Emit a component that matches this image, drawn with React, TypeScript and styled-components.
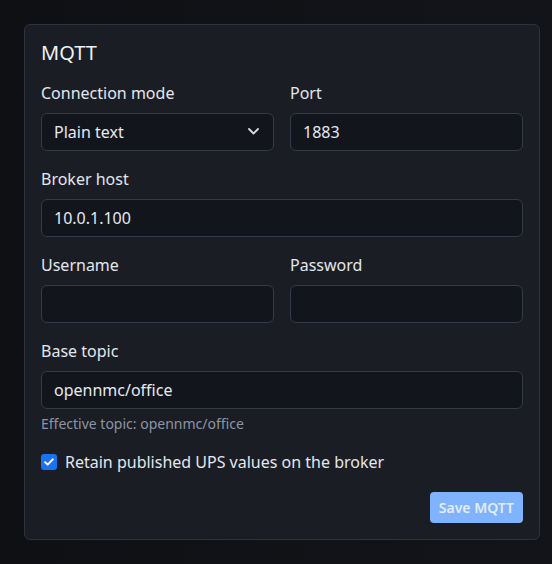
import React, { useState } from "react";
import styled, { createGlobalStyle } from "styled-components";

// Global

const GlobalStyle = createGlobalStyle`
  html, body {
    margin: 0;
    padding: 0;
    background: #111318;
  }
  body {
    font-family: "Noto Sans", "Open Sans", sans-serif;
    color: #e3e7ee;
  }
`;

// Styled Components

const Page = styled.div`
  padding: 24px;
  min-height: 564px;
  box-sizing: border-box;
  background: linear-gradient(90deg, #0f1014 0%, #121419 100%);
`;

const Card = styled.section`
  width: 516px;
  box-sizing: border-box;
  padding: 16px;
  background: #1a1d24;
  border: 1px solid #2d323e;
  border-radius: 6px;
  display: flex;
  flex-direction: column;
`;

const Title = styled.h2`
  margin: 0 0 16px;
  font-size: 20px;
  line-height: 24px;
  font-weight: 400;
  color: #eef1f6;
`;

const Row = styled.div<{ $cols?: number }>`
  display: grid;
  grid-template-columns: repeat(${(p) => p.$cols ?? 1}, 1fr);
  column-gap: 16px;
  margin-bottom: 16px;
`;

const Field = styled.div`
  display: flex;
  flex-direction: column;
`;

const Label = styled.label`
  font-size: 16px;
  line-height: 24px;
  margin-bottom: 8px;
  color: #e3e7ee;
`;

const Input = styled.input`
  box-sizing: border-box;
  height: 38px;
  width: 100%;
  padding: 0 12px;
  background: #12151c;
  border: 1px solid #343a47;
  border-radius: 6px;
  color: #e6e9ef;
  font-family: inherit;
  font-size: 16px;
  outline: 0;
`;

const SelectWrap = styled.div`
  position: relative;
`;

const Select = styled.select`
  box-sizing: border-box;
  appearance: none;
  height: 38px;
  width: 100%;
  padding: 0 36px 0 12px;
  background: #12151c;
  border: 1px solid #343a47;
  border-radius: 6px;
  color: #e6e9ef;
  font-family: inherit;
  font-size: 16px;
  outline: 0;
`;

const Chevron = styled.svg`
  position: absolute;
  right: 15px;
  top: 15px;
  pointer-events: none;
`;

const Help = styled.div`
  margin: -11px 0 16px;
  font-size: 14px;
  line-height: 20px;
  color: #8c95a5;
`;

const CheckRow = styled.label`
  display: flex;
  align-items: center;
  gap: 8px;
  font-size: 16px;
  line-height: 24px;
  color: #e3e7ee;
`;

const CheckBox = styled.span<{ $checked: boolean }>`
  width: 16px;
  height: 16px;
  border-radius: 3px;
  background: ${(p) => (p.$checked ? "#1a73f5" : "#12151c")};
  border: ${(p) => (p.$checked ? "none" : "1px solid #343a47")};
  display: flex;
  align-items: center;
  justify-content: center;
  flex-shrink: 0;
`;

const Actions = styled.div`
  display: flex;
  justify-content: flex-end;
  margin-top: 18px;
`;

const SaveButton = styled.button`
  height: 31px;
  padding: 0 9px;
  background: #80b3fd;
  border: 0;
  border-radius: 4px;
  color: #e4ecf8;
  font-family: inherit;
  font-size: 14px;
  font-weight: 600;
`;

// Functional Components

const App = () => {
  const [retain, setRetain] = useState(true);

  return (
    <Page>
      <GlobalStyle />
      <Card>
        <Title>MQTT</Title>
        <Row $cols={2}>
          <Field>
            <Label htmlFor="mode">Connection mode</Label>
            <SelectWrap>
              <Select id="mode" defaultValue="plain">
                <option value="plain">Plain text</option>
                <option value="tls">TLS</option>
              </Select>
              <Chevron width="11" height="7" viewBox="0 0 11 7">
                <path
                  d="M1 1l4.5 4.5L10 1"
                  fill="none"
                  stroke="#d6dae2"
                  strokeWidth="1.8"
                  strokeLinecap="round"
                  strokeLinejoin="round"
                />
              </Chevron>
            </SelectWrap>
          </Field>
          <Field>
            <Label htmlFor="port">Port</Label>
            <Input id="port" defaultValue="1883" />
          </Field>
        </Row>
        <Row>
          <Field>
            <Label htmlFor="host">Broker host</Label>
            <Input id="host" defaultValue="10.0.1.100" />
          </Field>
        </Row>
        <Row $cols={2}>
          <Field>
            <Label htmlFor="user">Username</Label>
            <Input id="user" />
          </Field>
          <Field>
            <Label htmlFor="pass">Password</Label>
            <Input id="pass" type="password" />
          </Field>
        </Row>
        <Row>
          <Field>
            <Label htmlFor="topic">Base topic</Label>
            <Input id="topic" defaultValue="opennmc/office" />
          </Field>
        </Row>
        <Help>Effective topic: opennmc/office</Help>
        <CheckRow onClick={() => setRetain(!retain)}>
          <CheckBox $checked={retain}>
            {retain && (
              <svg width="10" height="8" viewBox="0 0 10 8">
                <path
                  d="M1.2 4.2l2.5 2.4L8.8 1.4"
                  fill="none"
                  stroke="#fff"
                  strokeWidth="2"
                  strokeLinecap="round"
                  strokeLinejoin="round"
                />
              </svg>
            )}
          </CheckBox>
          Retain published UPS values on the broker
        </CheckRow>
        <Actions>
          <SaveButton type="button">Save MQTT</SaveButton>
        </Actions>
      </Card>
    </Page>
  );
};

export default App;
